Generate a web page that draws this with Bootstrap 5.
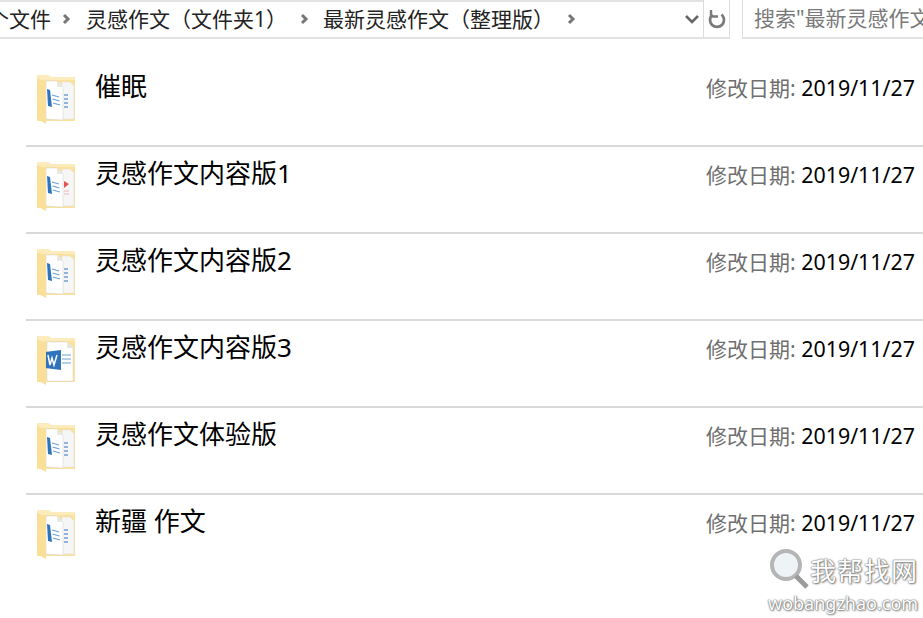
<!DOCTYPE html>
<html lang="zh-CN">
<head>
  <meta charset="UTF-8">
  <title>最新灵感作文（整理版）</title>
  <link href="https://cdn.jsdelivr.net/npm/bootstrap@5.3.0/dist/css/bootstrap.min.css" rel="stylesheet">
  <style>
    html, body {
      height: 618px;
      overflow: hidden;
      background: #fff;
    }
    body {
      font-family: "Noto Sans", "Noto Sans CJK SC", sans-serif;
      color: #000;
      position: relative;
    }
    .addr-bar {
      height: 39px;
      font-size: 21px;
      line-height: 36px;
      color: #222;
    }
    .crumbs {
      width: 715px;
      height: 39px;
      margin-left: -12px;
      padding-bottom: 2px;
      border-top: 2px solid #e3e3e3;
      border-bottom: 2px solid #e3e3e3;
      white-space: nowrap;
      overflow: hidden;
    }
    .crumb-sep {
      width: 9px;
      height: 12px;
      margin: 0 15px 0 11px;
      flex: none;
    }
    .crumb-gap { margin: 0 14px 0 13px; }
    .drop-arrow {
      width: 16px;
      height: 10px;
      margin-left: auto;
      margin-right: 3px;
      flex: none;
    }
    .refresh-btn {
      width: 27px;
      height: 39px;
      border-left: 1px solid #dcdcdc;
      border-right: 1px solid #dcdcdc;
      border-bottom: 2px solid #e3e3e3;
      flex: none;
    }
    .search-box {
      margin-left: 12px;
      padding-left: 11px;
      flex: 1;
      min-width: 0;
      height: 39px;
      border-left: 1px solid #dcdcdc;
      border-bottom: 2px solid #e3e3e3;
      color: #7a7a7a;
      white-space: nowrap;
      overflow: hidden;
    }
    .file-list {
      margin: 21px 0 0 26px;
    }
    .file-row {
      height: 87px;
      border-bottom: 2px solid #d9d9d9;
      padding-left: 9px;
    }
    .file-row:last-child { border-bottom: 0; }
    .file-icon {
      width: 42px;
      height: 52px;
      margin-top: 14px;
      flex: none;
      filter: blur(.4px);
    }
    .file-name {
      margin: 5px 0 0 18px;
      font-size: 26px;
      line-height: 42px;
    }
    .file-date {
      margin: 7px 8px 0 auto;
      font-size: 21.4px;
      line-height: 42px;
    }
    .date-label {
      color: #6f6f6f;
      font-size: 21px;
    }
    .stamp {
      position: absolute;
      left: 768px;
      top: 549px;
      width: 154px;
      color: #fff;
      text-shadow: 0 0 1px #666, 0 0 2px #777, 1px 1px 2px #888;
    }
    .stamp-cn {
      font-size: 26px;
      line-height: 44px;
      margin-left: 42px;
      letter-spacing: 1px;
    }
    .stamp-en {
      font-size: 18px;
      line-height: 20px;
      white-space: nowrap;
    }
    .stamp-glass {
      position: absolute;
      left: 1px;
      top: 0;
      width: 44px;
      height: 42px;
    }
  </style>
</head>
<body>
  <svg width="0" height="0" class="position-absolute">
    <defs>
      <symbol id="folder-back" viewBox="0 0 42 52">
        <path d="M2 1h11l3 2h24v44H2z" fill="#fae29c"/>
        <path d="M2 1h11l3 2h24v3H2z" fill="#fcecbc"/>
      </symbol>
      <symbol id="folder-front" viewBox="0 0 42 52">
        <path d="M2 4l9 4v42l-9-5z" fill="#f9df98"/>
      </symbol>
      <symbol id="doc-right" viewBox="0 0 42 52">
        <path d="M27 8l8 0 4 4v33H27z" fill="#f6f6f6" stroke="#e2e2e2" stroke-width=".6"/>
      </symbol>
      <symbol id="doc-left" viewBox="0 0 42 52">
        <path d="M11 7l11 0 6 6v33l-17-1z" fill="#fff" stroke="#d8d8d8" stroke-width=".6"/>
        <path d="M22 7v6h6z" fill="#e8e8e8"/>
      </symbol>
      <symbol id="doc-lines" viewBox="0 0 42 52">
        <path d="M12 15l3 1 2 17-4-1z" fill="#2f73bb"/>
        <path d="M17 21l7 2M17.500 25l7 2M18 29l7 2" stroke="#6ea0d6" stroke-width="1.300"/>
      </symbol>
      <symbol id="doc-lines-r" viewBox="0 0 42 52">
        <path d="M29 21h4M29 25h4M29 29h4M29 33h4" stroke="#6ea0d6" stroke-width="1.300"/>
      </symbol>
    </defs>
  </svg>

  <div class="addr-bar d-flex align-items-start">
    <div class="crumbs d-flex align-items-center">
      <span>个文件</span>
      <svg class="crumb-sep" viewBox="0 0 9 12"><path d="M2 2l4 4-4 4" fill="none" stroke="#777" stroke-width="3"/></svg>
      <span>灵感作文（文件夹1）</span>
      <svg class="crumb-sep crumb-gap" viewBox="0 0 9 12"><path d="M2 2l4 4-4 4" fill="none" stroke="#777" stroke-width="3"/></svg>
      <span>最新灵感作文（整理版）</span>
      <svg class="crumb-sep crumb-gap" viewBox="0 0 9 12"><path d="M2 2l4 4-4 4" fill="none" stroke="#777" stroke-width="3"/></svg>
      <svg class="drop-arrow" viewBox="0 0 16 10"><path d="M2 2l6 6 6-6" fill="none" stroke="#666" stroke-width="2.6"/></svg>
    </div>
    <div class="refresh-btn d-flex align-items-center justify-content-center">
      <svg width="18" height="20" viewBox="0 0 18 20"><path d="M4.500 5.500a7 7 0 1 0 9 0" fill="none" stroke="#7b7b7b" stroke-width="2.800"/><path d="M3 1v6.500h7" fill="none" stroke="#7b7b7b" stroke-width="2.400"/></svg>
    </div>
    <div class="search-box">搜索"最新灵感作文（整理版）"</div>
  </div>

  <div class="file-list">
    <div class="file-row d-flex align-items-start">
      <svg class="file-icon" viewBox="0 0 42 52"><use href="#folder-back"/><use href="#doc-right"/><use href="#doc-lines-r"/><use href="#doc-left"/><use href="#doc-lines"/><use href="#folder-front"/></svg>
      <div class="file-name">催眠</div>
      <div class="file-date"><span class="date-label">修改日期:</span> 2019/11/27</div>
    </div>
    <div class="file-row d-flex align-items-start">
      <svg class="file-icon" viewBox="0 0 42 52"><use href="#folder-back"/><use href="#doc-right"/><path d="M29 20l5 3-5 4z" fill="#e2574c"/><path d="M29 30h5M29 33h5" stroke="#e9b3ae" stroke-width="1.200"/><use href="#doc-left"/><use href="#doc-lines"/><use href="#folder-front"/></svg>
      <div class="file-name">灵感作文内容版1</div>
      <div class="file-date"><span class="date-label">修改日期:</span> 2019/11/27</div>
    </div>
    <div class="file-row d-flex align-items-start">
      <svg class="file-icon" viewBox="0 0 42 52"><use href="#folder-back"/><use href="#doc-right"/><use href="#doc-lines-r"/><use href="#doc-left"/><use href="#doc-lines"/><use href="#folder-front"/></svg>
      <div class="file-name">灵感作文内容版2</div>
      <div class="file-date"><span class="date-label">修改日期:</span> 2019/11/27</div>
    </div>
    <div class="file-row d-flex align-items-start">
      <svg class="file-icon" viewBox="0 0 42 52"><use href="#folder-back"/><path d="M12 7h20l6 6v33H12z" fill="#fff" stroke="#d8d8d8" stroke-width=".6"/><path d="M32 7v6h6z" fill="#e6e6e6"/><path d="M10 17l16-2v20l-16-2z" fill="#2f73bb"/><path d="M13 20l2 10 2-7 2 7 3-10" fill="none" stroke="#fff" stroke-width="1.500"/><path d="M27 20h9M27 24h9M27 28h9" stroke="#6ea0d6" stroke-width="1.200"/><use href="#folder-front"/></svg>
      <div class="file-name">灵感作文内容版3</div>
      <div class="file-date"><span class="date-label">修改日期:</span> 2019/11/27</div>
    </div>
    <div class="file-row d-flex align-items-start">
      <svg class="file-icon" viewBox="0 0 42 52"><use href="#folder-back"/><use href="#doc-right"/><use href="#doc-lines-r"/><use href="#doc-left"/><use href="#doc-lines"/><use href="#folder-front"/></svg>
      <div class="file-name">灵感作文体验版</div>
      <div class="file-date"><span class="date-label">修改日期:</span> 2019/11/27</div>
    </div>
    <div class="file-row d-flex align-items-start">
      <svg class="file-icon" viewBox="0 0 42 52"><use href="#folder-back"/><use href="#doc-right"/><use href="#doc-lines-r"/><use href="#doc-left"/><use href="#doc-lines"/><use href="#folder-front"/></svg>
      <div class="file-name">新疆 作文</div>
      <div class="file-date"><span class="date-label">修改日期:</span> 2019/11/27</div>
    </div>
  </div>

  <div class="stamp">
    <svg class="stamp-glass" viewBox="0 0 44 42"><circle cx="17" cy="16" r="14" fill="#eef3f5" stroke="#b5b5b5" stroke-width="4"/><path d="M27 27l11 11" stroke="#9a9a9a" stroke-width="5"/></svg>
    <div class="stamp-cn">我帮找网</div>
    <div class="stamp-en">wobangzhao.com</div>
  </div>
</body>
</html>
